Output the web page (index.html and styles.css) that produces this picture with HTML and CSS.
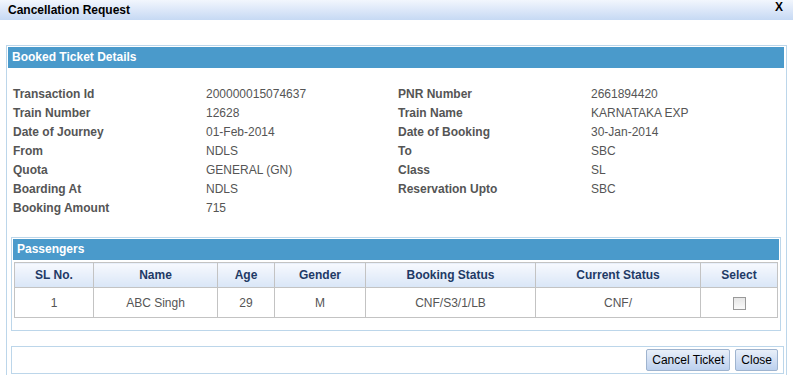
FILE: index.html
```html
<!DOCTYPE html>
<html lang="en">
<head>
  <meta charset="UTF-8" />
  <title>Cancellation Request</title>
  <link rel="stylesheet" href="styles.css">
</head>
<body>

  <!-- title bar -->
  <div class="titlebar">
    <span>Cancellation Request</span>
    <span class="close-x">X</span>
  </div>

  <div class="panel">
    <div class="panel-head">Booked Ticket Details</div>

    <div class="details">
      <div class="lbl">Transaction Id</div><div class="val">200000015074637</div>
      <div class="lbl">PNR Number</div><div class="val">2661894420</div>
      <div class="lbl">Train Number</div><div class="val">12628</div>
      <div class="lbl">Train Name</div><div class="val">KARNATAKA EXP</div>
      <div class="lbl">Date of Journey</div><div class="val">01-Feb-2014</div>
      <div class="lbl">Date of Booking</div><div class="val">30-Jan-2014</div>
      <div class="lbl">From</div><div class="val">NDLS</div>
      <div class="lbl">To</div><div class="val">SBC</div>
      <div class="lbl">Quota</div><div class="val">GENERAL (GN)</div>
      <div class="lbl">Class</div><div class="val">SL</div>
      <div class="lbl">Boarding At</div><div class="val">NDLS</div>
      <div class="lbl">Reservation Upto</div><div class="val">SBC</div>
      <div class="lbl">Booking Amount</div><div class="val">715</div>
    </div>

    <!-- passengers -->
    <div class="sub-panel">
      <div class="panel-head">Passengers</div>
      <table class="pax">
        <colgroup>
          <col style="width:79px"><col style="width:124px"><col style="width:57px"><col style="width:91px">
          <col style="width:170px"><col style="width:165px"><col>
        </colgroup>
        <thead>
          <tr>
            <th>SL No.</th><th>Name</th><th>Age</th><th>Gender</th>
            <th>Booking Status</th><th>Current Status</th><th>Select</th>
          </tr>
        </thead>
        <tbody>
          <tr>
            <td>1</td><td>ABC Singh</td><td>29</td><td>M</td>
            <td>CNF/S3/1/LB</td><td>CNF/</td><td><span class="chk"></span></td>
          </tr>
        </tbody>
      </table>
    </div>

    <div class="footer">
      <button class="btn">Cancel Ticket</button>
      <button class="btn">Close</button>
    </div>
  </div>

</body>
</html>
```

FILE: styles.css
```css
/* ===== base ===== */
body{
  margin:0;padding:0;
  font-family:"Liberation Sans",Arial,Helvetica,sans-serif;
  font-size:12px;color:#555;background:#fff;
  overflow:hidden;
}

/* title bar */
.titlebar{
  height:20px;line-height:21px;
  padding:0 10px 0 8px;
  display:flex;justify-content:space-between;
  background:linear-gradient(#f2f6fd,#c6d9f4);
  color:#000;font-weight:bold;font-size:12px;
}
.close-x{position:relative;top:-3px;}

/* main panel */
.panel{
  margin:25px 0 0 6px;width:778px;
  border:1px solid #bcd6ea;padding:1px 0 0 1px;
  height:340px;
}
.panel-head{
  background:#4a9acb;color:#fff;font-weight:bold;font-size:12px;
  height:21px;line-height:21px;padding-left:4px;
}
.panel > .panel-head{width:772px;}

/* detail grid */
.details{
  display:grid;grid-template-columns:193px 192px 193px 1fr;
  padding:17px 0 0 5px;line-height:19px;
}
.lbl{font-weight:bold;color:#555;}
.val{color:#555;}

/* passengers */
.sub-panel{
  margin:19px 0 0 3px;width:766px;
  border:1px solid #bcd6ea;padding:1px;height:90px;
}
.pax{
  border-collapse:collapse;margin:2px 0 0 1px;width:764px;table-layout:fixed;
}
.pax th,.pax td{border:1px solid #c3c3c3;text-align:center;}
.pax th{
  height:22px;color:#1e3a66;font-weight:bold;
  background:linear-gradient(#f7f9fe,#d9e6f7);
}
.pax td{height:27px;color:#555;}
.chk{
  display:inline-block;width:11px;height:11px;vertical-align:middle;
  border:1px solid #999;background:linear-gradient(#e6e6e6,#fafafa);
}

/* footer */
.footer{
  margin:15px 0 0 3px;width:766px;height:26px;
  border:1px solid #bcd6ea;
  display:flex;justify-content:flex-end;align-items:center;gap:5px;padding:0 5px 0 0;
}
.btn{
  height:22px;padding:0 5px;
  font-family:"Liberation Sans",Arial,sans-serif;font-size:12px;color:#000;
  border:1px solid #9fb4cf;border-radius:2px;
  background:linear-gradient(#e8eff9,#bcd0ee);
  cursor:pointer;
}
```
